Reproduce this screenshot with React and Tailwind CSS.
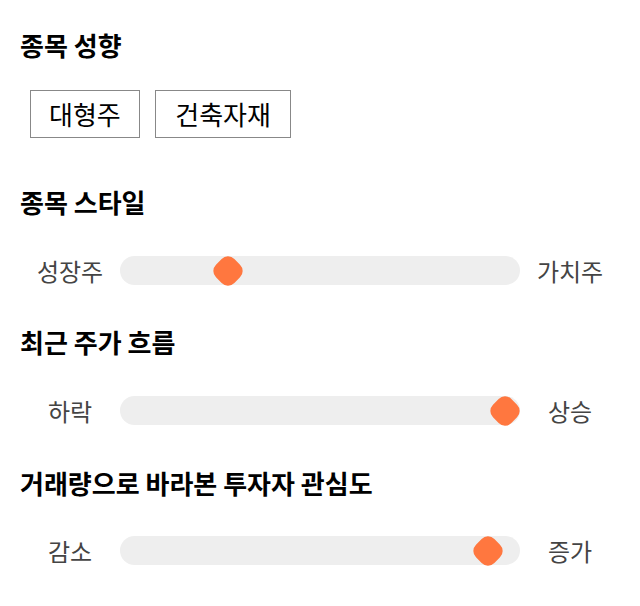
const FONT = 'font-["Noto_Sans_CJK_KR","Noto_Sans",sans-serif]';

function Heading({ children, className = '' }) {
  return (
    <h2 className={`text-[26px] leading-[32px] font-bold text-black ${className}`}>{children}</h2>
  );
}

function SliderRow({ left, right, thumb, className = '' }) {
  return (
    <div className={`flex items-center ${className}`}>
      <div className="w-[100px] text-center text-[24px] leading-[29px] text-[#444444]">{left}</div>
      <div className="relative h-[29px] flex-1 rounded-full bg-[#eeeeee]">
        <div className={`absolute top-[1.5px] h-[26px] w-[26px] rotate-45 rounded-[9px] bg-[#ff773f] ${thumb}`} />
      </div>
      <div className="w-[100px] text-center text-[24px] leading-[29px] text-[#444444]">{right}</div>
    </div>
  );
}

export default function App() {
  return (
    <div className={`min-h-[606px] w-[640px] bg-white px-[20px] pt-[29px] ${FONT}`}>
      <Heading>종목 성향</Heading>
      <div className="mt-[29px] flex gap-[15px] pl-[10px]">
        <div className="h-[48px] border border-[#888888] px-[18px] text-[26px] leading-[46px] text-black">대형주</div>
        <div className="h-[48px] border border-[#888888] px-[19.5px] text-[26px] leading-[46px] text-black">건축자재</div>
      </div>

      <Heading className="mt-[48px]">종목 스타일</Heading>
      <SliderRow className="mt-[38px] -mx-[20px] px-[20px]" left="성장주" right="가치주" thumb="left-[95px]" />

      <Heading className="mt-[41px]">최근 주가 흐름</Heading>
      <SliderRow className="mt-[38px] -mx-[20px] px-[20px]" left="하락" right="상승" thumb="left-[372px]" />

      <Heading className="mt-[42px]">거래량으로 바라본 투자자 관심도</Heading>
      <SliderRow className="mt-[37px] -mx-[20px] px-[20px]" left="감소" right="증가" thumb="left-[355px]" />
    </div>
  );
}
